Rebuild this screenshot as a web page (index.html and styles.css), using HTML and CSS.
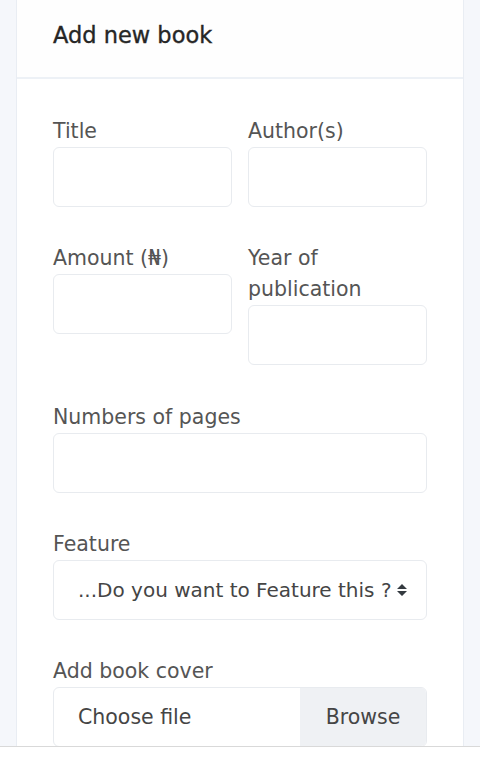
FILE: index.html
```html
<!DOCTYPE html>
<html lang="en">
<head>
<meta charset="utf-8">
<title>Add new book</title>
<link rel="stylesheet" href="styles.css">
</head>
<body>
<div class="card">
  <div class="card-header">
    <h2 class="card-title">Add new book</h2>
  </div>
  <form class="card-body">
    <div class="row">
      <div class="group">
        <label class="label">Title</label>
        <input class="control" type="text">
      </div>
      <div class="group">
        <label class="label">Author(s)</label>
        <input class="control" type="text">
      </div>
    </div>
    <div class="row">
      <div class="group">
        <label class="label">Amount (₦)</label>
        <input class="control" type="text">
      </div>
      <div class="group">
        <label class="label">Year of publication</label>
        <input class="control" type="text">
      </div>
    </div>
    <div class="group">
      <label class="label">Numbers of pages</label>
      <input class="control" type="text">
    </div>
    <div class="group">
      <label class="label">Feature</label>
      <div class="select-wrap">
        <select class="control select">
          <option>...Do you want to Feature this ?</option>
        </select>
        <svg class="select-arrows" width="12" height="14" viewBox="0 0 12 14"><path d="M6 1 L11 6 H1 Z M6 13 L11 8 H1 Z" fill="#343a40"/></svg>
      </div>
    </div>
    <div class="group">
      <label class="label">Add book cover</label>
      <div class="file">
        <span class="file-text">Choose file</span>
        <span class="file-btn">Browse</span>
      </div>
    </div>
  </form>
</div>
<div class="bottom-bar"></div>
</body>
</html>
```
FILE: styles.css
```css
* { box-sizing: border-box; }
html, body { margin: 0; padding: 0; }
body {
  background: #f5f7fb;
  font-family: "DejaVu Sans", "Noto Sans", sans-serif;
  color: #495057;
}
.card {
  margin: 0 16px;
  background: #fff;
  border-left: 1px solid #e9edf3;
  border-right: 1px solid #e9edf3;
  min-height: 760px;
}
.card-header {
  height: 79px;
  padding: 0 36px;
  border-bottom: 2px solid #edf1f6;
  background: #fefefe;
}
.card-title {
  margin: 0;
  padding-top: 18px;
  font-size: 22.5px;
  line-height: 34px;
  font-weight: normal;
  color: #262626;
  -webkit-text-stroke: 0.35px #262626;
}
.card-body {
  padding: 37px 36px 0;
}
.row {
  display: grid;
  grid-template-columns: 1fr 1fr;
  gap: 16px;
}
.group {
  margin-bottom: 36.3px;
}
.label {
  display: block;
  font-size: 20.5px;
  line-height: 31px;
  margin-bottom: 0;
  color: #555;
}
.control {
  display: block;
  width: 100%;
  height: 60px;
  border: 1px solid #e8ebef;
  border-radius: 6px;
  background: #fff;
  padding: 0 24px;
  font-family: inherit;
  font-size: 20.5px;
  color: #454545;
  outline: none;
}
.select-wrap { position: relative; }
.select {
  appearance: none;
  -webkit-appearance: none;
  padding-right: 20px;
  font-size: 20px;
}
.select-arrows {
  position: absolute;
  right: 19px;
  top: 23px;
}
.file {
  display: flex;
  height: 60px;
  border: 1px solid #e8ebef;
  border-radius: 6px;
  overflow: hidden;
  font-size: 20.5px;
  color: #454545;
}
.file-text {
  flex: 1;
  display: flex;
  align-items: center;
  padding-left: 24px;
}
.file-btn {
  width: 126px;
  display: flex;
  align-items: center;
  justify-content: center;
  background: #eff1f4;
}
.bottom-bar {
  position: fixed;
  left: 0;
  right: 0;
  bottom: 0;
  height: 11px;
  background: #fff;
  border-top: 1px solid #d9d9d9;
}
```
